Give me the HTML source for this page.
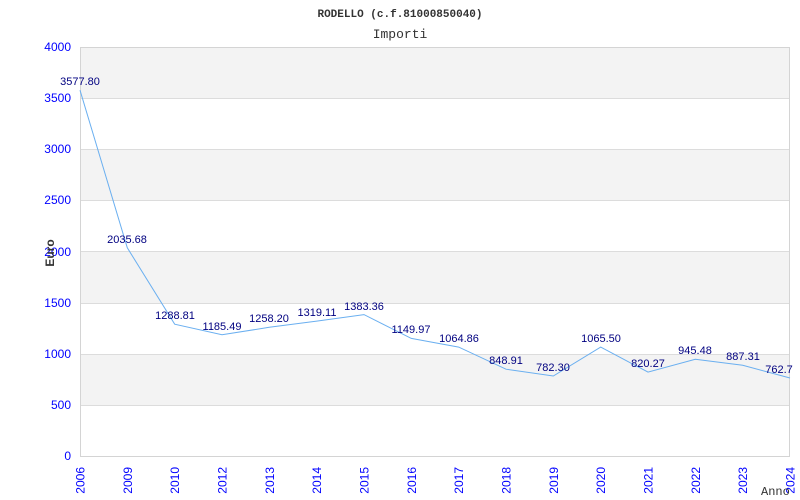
<!DOCTYPE html>
<html><head><meta charset="utf-8"><style>html,body{margin:0;padding:0;background:#fff;width:800px;height:500px;overflow:hidden}</style></head>
<body>
<svg width="800" height="500" xmlns="http://www.w3.org/2000/svg" font-family="Liberation Sans, sans-serif">
<rect x="0" y="0" width="800" height="500" fill="#fff"/>
<g fill="#f3f3f3">
<rect x="80" y="47" width="710" height="51"/>
<rect x="80" y="149.5" width="710" height="51"/>
<rect x="80" y="252" width="710" height="51"/>
<rect x="80" y="354" width="710" height="51"/>
</g>
<g stroke="#dcdcdc" stroke-width="1">
<line x1="80" y1="98.5" x2="790" y2="98.5"/>
<line x1="80" y1="149.5" x2="790" y2="149.5"/>
<line x1="80" y1="200.5" x2="790" y2="200.5"/>
<line x1="80" y1="251.5" x2="790" y2="251.5"/>
<line x1="80" y1="303.5" x2="790" y2="303.5"/>
<line x1="80" y1="354.5" x2="790" y2="354.5"/>
<line x1="80" y1="405.5" x2="790" y2="405.5"/>
<rect x="80.5" y="47.5" width="709" height="409" fill="none" stroke="#d4d4d4"/>
</g>
<polyline fill="none" stroke="#6aaff0" stroke-width="1" points="80,90.2 127.3,247.8 174.7,324.2 222,334.8 269.3,327.3 316.7,321.1 364,314.6 411.3,338.4 458.7,347.1 506,369.2 553.3,376 600.7,347.1 648,372.1 695.3,359.3 742.7,365.3 790,378"/>
<g font-size="11" fill="#000080" text-anchor="middle">
<text x="80" y="85">3577.80</text>
<text x="127" y="243">2035.68</text>
<text x="175" y="319">1288.81</text>
<text x="222" y="330">1185.49</text>
<text x="269" y="322">1258.20</text>
<text x="317" y="316">1319.11</text>
<text x="364" y="310">1383.36</text>
<text x="411" y="333">1149.97</text>
<text x="459" y="342">1064.86</text>
<text x="506" y="364">848.91</text>
<text x="553" y="371">782.30</text>
<text x="601" y="342">1065.50</text>
<text x="648" y="367">820.27</text>
<text x="695" y="354">945.48</text>
<text x="743" y="360">887.31</text>
<text x="779" y="373">762.7</text>
</g>
<g font-size="12" fill="#0000ff" text-anchor="end">
<text x="71" y="51">4000</text>
<text x="71" y="102">3500</text>
<text x="71" y="153">3000</text>
<text x="71" y="204">2500</text>
<text x="71" y="256">2000</text>
<text x="71" y="307">1500</text>
<text x="71" y="358">1000</text>
<text x="71" y="409">500</text>
<text x="71" y="460">0</text>
</g>
<g font-size="12" fill="#0000ff" text-anchor="end">
<text transform="translate(84.5,467) rotate(-90)">2006</text>
<text transform="translate(131.8,467) rotate(-90)">2009</text>
<text transform="translate(179.2,467) rotate(-90)">2010</text>
<text transform="translate(226.5,467) rotate(-90)">2012</text>
<text transform="translate(273.8,467) rotate(-90)">2013</text>
<text transform="translate(321.2,467) rotate(-90)">2014</text>
<text transform="translate(368.5,467) rotate(-90)">2015</text>
<text transform="translate(415.8,467) rotate(-90)">2016</text>
<text transform="translate(463.2,467) rotate(-90)">2017</text>
<text transform="translate(510.5,467) rotate(-90)">2018</text>
<text transform="translate(557.8,467) rotate(-90)">2019</text>
<text transform="translate(605.2,467) rotate(-90)">2020</text>
<text transform="translate(652.5,467) rotate(-90)">2021</text>
<text transform="translate(699.8,467) rotate(-90)">2022</text>
<text transform="translate(747.2,467) rotate(-90)">2023</text>
<text transform="translate(794.5,467) rotate(-90)">2024</text>
</g>
<text x="400" y="17" font-family="Liberation Mono, monospace" font-size="11" font-weight="bold" fill="#333" text-anchor="middle">RODELLO (c.f.81000850040)</text>
<text x="400" y="38" font-family="Liberation Mono, monospace" font-size="13" fill="#333" text-anchor="middle">Importi</text>
<text transform="translate(54,253) rotate(-90)" font-size="12" font-weight="bold" fill="#333" text-anchor="middle">Euro</text>
<text x="761" y="495" font-family="Liberation Mono, monospace" font-size="12" fill="#333">Anno</text>
</svg>
</body></html>
